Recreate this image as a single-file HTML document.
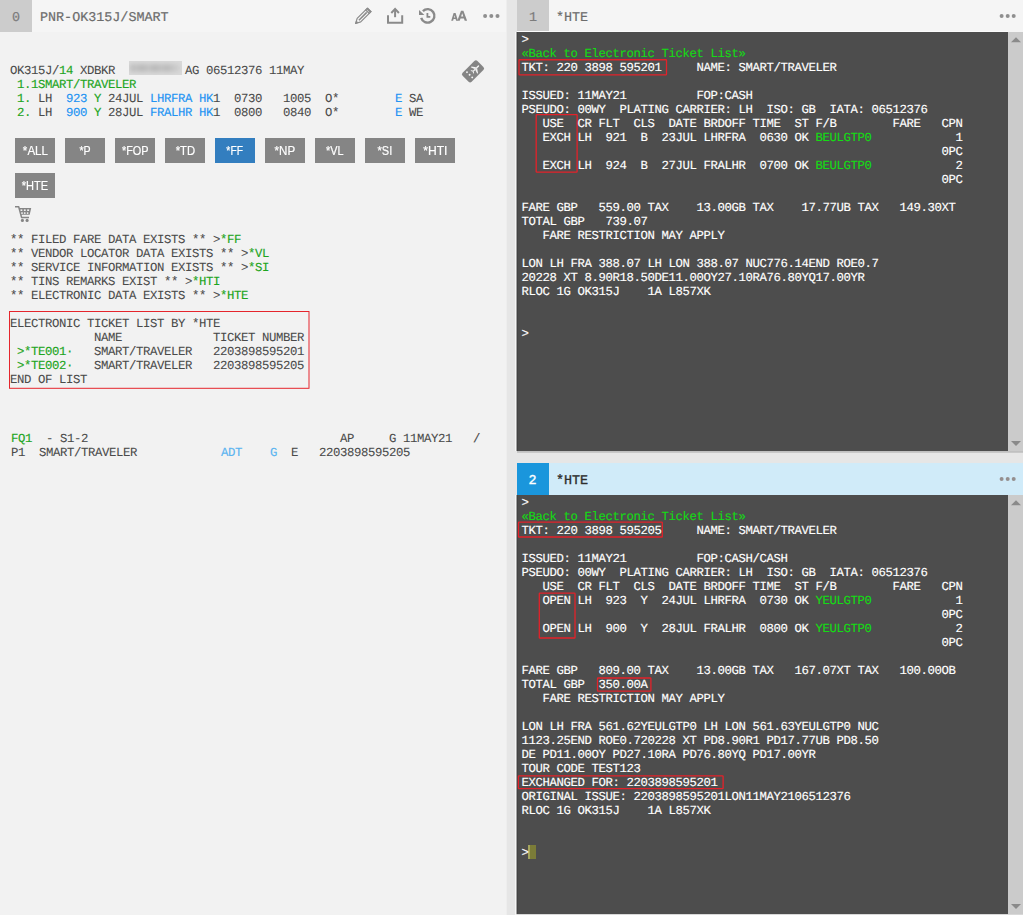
<!DOCTYPE html>
<html><head><meta charset="utf-8"><title>Smartpoint</title>
<style>
html,body{margin:0;padding:0;}
body{width:1023px;height:915px;position:relative;overflow:hidden;background:#f2f2f2;font-family:"Liberation Sans",sans-serif;}
.a{position:absolute;}
pre.t{position:absolute;margin:0;padding:0;font-family:"Liberation Mono",monospace;font-size:12.3px;letter-spacing:-0.38px;text-rendering:geometricPrecision;line-height:14px;white-space:pre;}
pre.lt{color:#4a4a4a;-webkit-text-stroke:0.08px #4a4a4a;}
pre.rt{color:#ffffff;-webkit-text-stroke:0.15px #ffffff;}
.lt .g{color:#1ea51e;-webkit-text-stroke:0.15px #1ea51e;}
.lt .b{color:#2394f2;-webkit-text-stroke:0.15px #2394f2;}
.lt .lb{color:#5ab4f0;-webkit-text-stroke:0.15px #5ab4f0;}
.rt .g{color:#14dc14;-webkit-text-stroke:0.12px #14dc14;}
.hdr{position:absolute;height:32px;background:#f5f5f5;}
.tab{position:absolute;width:32px;height:32px;top:0;left:0;background:#cccccc;}
.mono{text-rendering:geometricPrecision;font-family:"Liberation Mono",monospace;font-size:13.4px;line-height:16px;white-space:pre;position:absolute;}
.btn{position:absolute;width:40px;height:25px;background:#858585;color:#fff;font-size:13.3px;line-height:25px;text-align:center;}
.btn span{display:inline-block;-webkit-text-stroke:0.2px #fff;transform:scaleX(0.87);transform-origin:50% 50%;}
.btn.on{background:#337ebf;}
.dark{position:absolute;background:#4d4d4d;}
.sb{position:absolute;width:15px;background:#cbcbcb;}

</style></head>
<body>
<!-- left panel header -->
<div class="hdr" style="left:0;top:0;width:506px;"></div>
<div class="tab" style="left:0;top:0;"></div>
<div class="mono" style="left:12px;top:10.8px;color:#7c7c7c;-webkit-text-stroke:0.2px #7c7c7c;">0</div>
<div class="mono" style="left:40px;top:10.8px;color:#6c6c6c;-webkit-text-stroke:0.2px #6c6c6c;">PNR-OK315J/SMART</div>
<!-- gutter -->
<div class="a" style="left:506px;top:0;width:1px;height:915px;background:#eeeeee;"></div>
<div class="a" style="left:507px;top:0;width:10px;height:915px;background:#e6e6e6;"></div>
<!-- right panel 1 -->
<div class="hdr" style="left:517px;top:0;width:506px;"></div>
<div class="tab" style="left:517px;top:0;"></div>
<div class="mono" style="left:529px;top:10.8px;color:#7c7c7c;-webkit-text-stroke:0.2px #7c7c7c;">1</div>
<div class="mono" style="left:556px;top:10.8px;color:#6c6c6c;-webkit-text-stroke:0.2px #6c6c6c;">*HTE</div>
<div class="dark" style="left:517px;top:32px;width:491px;height:419px;"></div>
<div class="sb" style="left:1008px;top:32px;height:419px;"></div>
<!-- gap -->
<div class="a" style="left:507px;top:451px;width:516px;height:12px;background:#e6e6e6;"></div>
<!-- right panel 2 -->
<div class="hdr" style="left:517px;top:463px;width:506px;background:#d0ebf9;"></div>
<div class="tab" style="left:517px;top:463px;background:#1a96dc;"></div>
<div class="mono" style="left:528.5px;top:473.8px;color:#ffffff;-webkit-text-stroke:0.35px #ffffff;">2</div>
<div class="mono" style="left:556px;top:473.8px;color:#2e2e2e;-webkit-text-stroke:0.35px #2e2e2e;">*HTE</div>
<div class="dark" style="left:517px;top:495px;width:491px;height:419px;"></div>
<div class="sb" style="left:1008px;top:495px;height:419px;"></div>
<!-- buttons -->
<div class="btn" style="left:15px;top:138px;"><span style="transform:scaleX(0.87)">*ALL</span></div>
<div class="btn" style="left:65px;top:138px;"><span style="transform:scaleX(0.8)">*P</span></div>
<div class="btn" style="left:115px;top:138px;"><span style="transform:scaleX(0.82)">*FOP</span></div>
<div class="btn" style="left:165px;top:138px;"><span style="transform:scaleX(0.85)">*TD</span></div>
<div class="btn on" style="left:215px;top:138px;"><span style="transform:scaleX(0.78)">*FF</span></div>
<div class="btn" style="left:265px;top:138px;"><span style="transform:scaleX(0.87)">*NP</span></div>
<div class="btn" style="left:315px;top:138px;"><span style="transform:scaleX(0.82)">*VL</span></div>
<div class="btn" style="left:365px;top:138px;"><span style="transform:scaleX(0.83)">*SI</span></div>
<div class="btn" style="left:415px;top:138px;"><span style="transform:scaleX(0.91)">*HTI</span></div>
<div class="btn" style="left:15px;top:173px;"><span style="transform:scaleX(0.83)">*HTE</span></div>
<!-- white line left of dark panels -->
<div class="a" style="left:515px;top:32px;width:1px;height:419px;background:#f6f6f6;"></div>
<div class="a" style="left:516px;top:32px;width:1px;height:419px;background:#a2a2a2;"></div>
<div class="a" style="left:515px;top:495px;width:1px;height:420px;background:#f6f6f6;"></div>
<div class="a" style="left:516px;top:495px;width:1px;height:419px;background:#a2a2a2;"></div>
<div class="a" style="left:517px;top:32px;width:1px;height:419px;background:#444444;"></div>
<div class="a" style="left:517px;top:495px;width:1px;height:419px;background:#444444;"></div>
<div class="a" style="left:517px;top:914px;width:506px;height:1px;background:#d8d8d8;"></div>
<div class="a" style="left:517px;top:451px;width:506px;height:1px;background:#c0c0c0;"></div>
<div class="a" style="left:517px;top:452px;width:506px;height:1px;background:#c8c8c8;"></div>
<div class="a" style="left:517px;top:31px;width:491px;height:1px;background:#fbfbfb;"></div>
<!-- blurred redaction -->
<div class="a" style="left:129px;top:61px;width:53px;height:14px;background:#dadada;overflow:hidden;">
 <div class="a" style="left:1px;top:3px;width:50px;height:8px;filter:blur(2.2px);background:linear-gradient(90deg,#bcbcbc 0%,#c2c2c2 12%,#b8b8b8 25%,#c4c4c4 37%,#b8b8b8 50%,#c2c2c2 62%,#bababa 75%,#c8c8c8 88%,#cecece 100%);"></div>
</div>
<!-- cursor -->
<div class="a" style="left:528px;top:845px;width:8px;height:14px;background:#7b7c38;"></div>
<div class="a" style="left:528px;top:845px;width:2px;height:14px;background:#a5a65e;"></div>
<!-- overlay svg: red boxes, arrows, dots, icons -->
<svg class="a" style="left:0;top:0;" width="1023" height="915" viewBox="0 0 1023 915">
 <g fill="none" stroke="#e3222a" stroke-width="1.3">
  <rect x="519" y="59.75" width="147.5" height="15.2" rx="0.6"/>
  <rect x="536.2" y="114.7" width="40.9" height="57.4" rx="0.6"/>
  <rect x="518.5" y="522.2" width="143.8" height="14.8" rx="0.6"/>
  <rect x="539.3" y="593.1" width="35.7" height="44.9" rx="0.6"/>
  <rect x="597.5" y="678" width="53.4" height="13.2" rx="0.6"/>
  <rect x="518.4" y="775.8" width="204.7" height="12.8" rx="0.6"/>
 </g>
 <rect x="9.5" y="311.5" width="299.5" height="76.8" fill="none" stroke="#e5252c" stroke-width="1"/>
 <!-- scroll arrows -->
 <g fill="#8a8a8a">
  <path d="M1011 42.3 L1016 37.3 L1021 42.3 Z"/>
  <path d="M1011 441 L1016 446 L1021 441 Z"/>
  <path d="M1011 505.3 L1016 500.3 L1021 505.3 Z"/>
  <path d="M1011 904 L1016 909 L1021 904 Z"/>
 </g>
 <!-- more dots -->
 <g fill="#8f8f8f">
  <circle cx="485.1" cy="16" r="2"/><circle cx="491.3" cy="16" r="2"/><circle cx="497.5" cy="16" r="2"/>
  <circle cx="1001.6" cy="16" r="2"/><circle cx="1007.7" cy="16" r="2"/><circle cx="1013.7" cy="16" r="2"/>
 </g>
 <g fill="#958f8f">
  <circle cx="1001.6" cy="479" r="2"/><circle cx="1007.7" cy="479" r="2"/><circle cx="1013.7" cy="479" r="2"/>
 </g>
</svg>
<svg class="a" style="left:0;top:0;" width="512" height="230" viewBox="0 0 512 230">
 <!-- pencil -->
 <g transform="translate(355.4,23.7) rotate(-45)" stroke="#8a8a8a" fill="none" stroke-linejoin="round">
  <path d="M0.3 0 L5 -2.5 L19.6 -2.5 L19.6 2.5 L5 2.5 Z" stroke-width="1.2"/>
  <path d="M5 0 L16 0" stroke-width="1.5"/>
  <rect x="16.6" y="-2.6" width="1" height="5.2" fill="#8a8a8a" stroke-width="0.6"/><rect x="18.6" y="-2.6" width="1.1" height="5.2" fill="#8a8a8a" stroke-width="0.8"/>
  <path d="M0.3 0 L2.6 -1.2 L2.6 1.2 Z" fill="#8a8a8a" stroke-width="0.6"/>
 </g>
 <!-- upload -->
 <g stroke="#8a8a8a" fill="none" stroke-width="2">
  <path d="M388 15.2 V22.8 H402.2 V15.2"/>
  <path d="M395.1 9.5 V17.2"/>
  <path d="M391.3 13 L395.1 8.9 L398.9 13" stroke-linejoin="miter"/>
 </g>
 <!-- history -->
 <g stroke="#8a8a8a" fill="none">
  <path d="M422.9 11.1 A6.75 6.75 0 1 1 421.2 17.8" stroke-width="2.4"/>
  <path d="M427.4 12.9 V16.9 H430.3" stroke-width="1.8"/>
  <path d="M419 10 L424.4 15 H419 Z" fill="#8a8a8a" stroke="none"/>
 </g>
 <!-- AA -->
 <g fill="#8a8a8a" fill-rule="evenodd" stroke="none">
  <path d="M451.2 20.8 L453.6 13.1 L455.6 13.1 L458 20.8 L456.1 20.8 L455.6 19.1 L453.6 19.1 L453.1 20.8 Z M454 17.6 L455.2 17.6 L454.6 15.3 Z"/>
  <path d="M457.3 20.8 L461 10.8 L463.4 10.8 L467.1 20.8 L464.7 20.8 L463.9 18.5 L460.5 18.5 L459.7 20.8 Z M461.1 16.6 L463.3 16.6 L462.2 13.3 Z"/>
 </g>
 <!-- ticket -->
 <g transform="translate(473,71.4) rotate(-45)">
  <rect x="-10.5" y="-6.4" width="21" height="12.8" rx="2.2" fill="#858585"/>
  <g fill="#f4f4f4">
   <circle cx="-4.8" cy="-3.7" r="0.95"/><circle cx="-4.8" cy="0" r="0.95"/><circle cx="-4.8" cy="3.7" r="0.95"/>
   <g transform="translate(3.6,0)">
    <path d="M4.9 0 C4.9 -0.5 4.2 -0.75 3.4 -0.75 L-3.8 -0.55 L-4.4 0 L-3.8 0.55 L3.4 0.75 C4.2 0.75 4.9 0.5 4.9 0 Z"/>
    <path d="M1.6 -0.6 L-1.1 -4.6 L-2.2 -4.6 L-0.9 -0.6 Z"/>
    <path d="M1.6 0.6 L-1.1 4.6 L-2.2 4.6 L-0.9 0.6 Z"/>
    <path d="M-3 -0.5 L-4.2 -2.1 L-4.9 -2.1 L-4.3 -0.4 Z"/>
    <path d="M-3 0.5 L-4.2 2.1 L-4.9 2.1 L-4.3 0.4 Z"/>
   </g>
  </g>
 </g>
 <!-- cart -->
 <g stroke="#858585" fill="none">
  <path d="M15 206.7 H18.7 L21.6 217.5 H29" stroke-width="1.5" stroke-linejoin="round"/>
  <path d="M19.2 208 H31.2 L29.7 214.8 H21 Z" fill="#858585" stroke="none"/>
  <g fill="#f0f0f0" stroke="none">
   <rect x="20.5" y="209.4" width="1.8" height="1.6"/><rect x="23.9" y="209.4" width="1.8" height="1.6"/><rect x="27.2" y="209.4" width="1.9" height="1.6"/>
   <rect x="21.2" y="212.3" width="1.6" height="1.6"/><rect x="23.9" y="212.3" width="1.6" height="1.6"/><rect x="26.9" y="212.3" width="1.4" height="1.6"/>
  </g>
  <circle cx="22.4" cy="220.4" r="1.55" fill="#858585" stroke="none"/>
  <circle cx="27.1" cy="220.4" r="1.55" fill="#858585" stroke="none"/>
 </g>
</svg>
<pre class="t lt" style="left:10px;top:64px">OK315J/<span class="g">14</span> XDBKR          AG 06512376 11MAY
<span class="g"> 1.1SMART/TRAVELER</span>
<span class="g"> 1.</span> LH  <span class="b">923</span> <span class="g">Y</span> 24JUL <span class="b">LHRFRA</span> <span class="b">HK</span>1  0730   1005  O*        <span class="b">E</span> SA
<span class="g"> 2.</span> LH  <span class="b">900</span> <span class="g">Y</span> 28JUL <span class="b">FRALHR</span> <span class="b">HK</span>1  0800   0840  O*        <span class="b">E</span> WE</pre><pre class="t lt" style="left:10px;top:233px">** FILED FARE DATA EXISTS ** &gt;<span class="g">*FF</span>
** VENDOR LOCATOR DATA EXISTS ** &gt;<span class="g">*VL</span>
** SERVICE INFORMATION EXISTS ** &gt;<span class="g">*SI</span>
** TINS REMARKS EXIST ** &gt;<span class="g">*HTI</span>
** ELECTRONIC DATA EXISTS ** &gt;<span class="g">*HTE</span>

ELECTRONIC TICKET LIST BY *HTE
            NAME             TICKET NUMBER
<span class="g"> &gt;*TE001·</span>   SMART/TRAVELER   2203898595201
<span class="g"> &gt;*TE002·</span>   SMART/TRAVELER   2203898595205
END OF LIST</pre><pre class="t lt" style="left:11px;top:432px"><span class="g">FQ1</span>  - S1-2                                    AP     G 11MAY21   /
P1  SMART/TRAVELER            <span class="lb">ADT</span>    <span class="lb">G</span>  E   2203898595205</pre><pre class="t rt" style="left:521.5px;top:33px">&gt;
<span class="g">«Back to Electronic Ticket List»</span>
TKT: 220 3898 595201     NAME: SMART/TRAVELER

ISSUED: 11MAY21          FOP:CASH
PSEUDO: 00WY  PLATING CARRIER: LH  ISO: GB  IATA: 06512376
   USE  CR FLT  CLS  DATE BRDOFF TIME  ST F/B        FARE   CPN
   EXCH LH  921  B  23JUL LHRFRA  0630 OK <span class="g">BEULGTP0</span>            1
                                                            0PC
   EXCH LH  924  B  27JUL FRALHR  0700 OK <span class="g">BEULGTP0</span>            2
                                                            0PC

FARE GBP   559.00 TAX    13.00GB TAX    17.77UB TAX   149.30XT
TOTAL GBP   739.07
   FARE RESTRICTION MAY APPLY

LON LH FRA 388.07 LH LON 388.07 NUC776.14END ROE0.7
20228 XT 8.90R18.50DE11.00OY27.10RA76.80YQ17.00YR
RLOC 1G OK315J    1A L857XK


&gt;</pre><pre class="t rt" style="left:521.5px;top:496px">&gt;
<span class="g">«Back to Electronic Ticket List»</span>
TKT: 220 3898 595205     NAME: SMART/TRAVELER

ISSUED: 11MAY21          FOP:CASH/CASH
PSEUDO: 00WY  PLATING CARRIER: LH  ISO: GB  IATA: 06512376
   USE  CR FLT  CLS  DATE BRDOFF TIME  ST F/B        FARE   CPN
   OPEN LH  923  Y  24JUL LHRFRA  0730 OK <span class="g">YEULGTP0</span>            1
                                                            0PC
   OPEN LH  900  Y  28JUL FRALHR  0800 OK <span class="g">YEULGTP0</span>            2
                                                            0PC

FARE GBP   809.00 TAX    13.00GB TAX   167.07XT TAX   100.00OB
TOTAL GBP  350.00A
   FARE RESTRICTION MAY APPLY

LON LH FRA 561.62YEULGTP0 LH LON 561.63YEULGTP0 NUC
1123.25END ROE0.720228 XT PD8.90R1 PD17.77UB PD8.50
DE PD11.00OY PD27.10RA PD76.80YQ PD17.00YR
TOUR CODE TEST123
EXCHANGED FOR: 2203898595201
ORIGINAL ISSUE: 2203898595201LON11MAY2106512376
RLOC 1G OK315J    1A L857XK


&gt;</pre>
</body></html>
